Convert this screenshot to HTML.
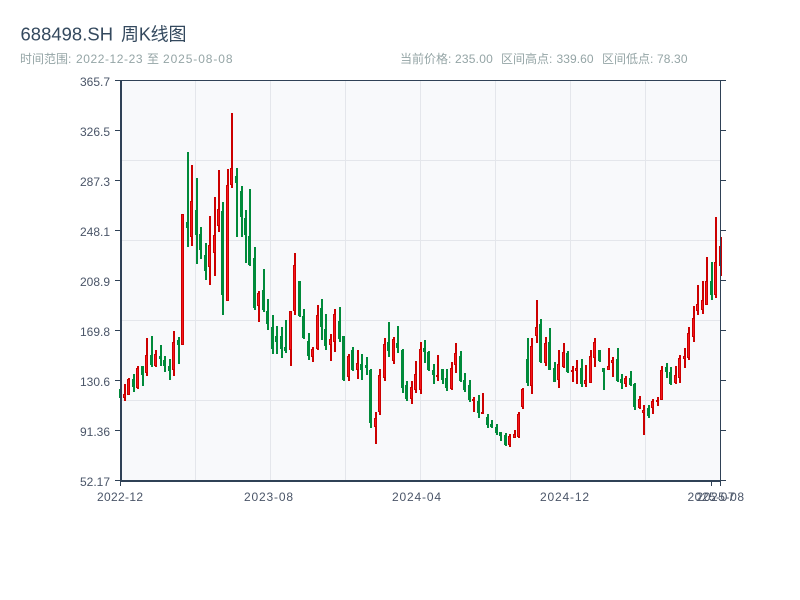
<!DOCTYPE html>
<html lang="zh">
<head>
<meta charset="utf-8">
<title>688498.SH 周K线图</title>
<style>
html,body{margin:0;padding:0;background:#fff;width:800px;height:600px;overflow:hidden}
svg{display:block;position:absolute;left:0;top:0}
text{font-family:"Liberation Sans","Noto Sans CJK SC",sans-serif}
.t{font-size:18.4px;fill:#34495e}
.s{font-size:12px;fill:#95a5a6}
.a{font-size:12px;fill:#4a5568}
</style>
</head>
<body>
<svg width="800" height="600" viewBox="0 0 800 600" xmlns="http://www.w3.org/2000/svg">
<rect x="120" y="80" width="600" height="400" fill="#f8f9fb"/>
<g shape-rendering="crispEdges" fill="none">
<path stroke="#e4e6eb" stroke-width="1" d="M195.5 80V480M270.5 80V480M345.5 80V480M420.5 80V480M495.5 80V480M570.5 80V480M645.5 80V480M120 160.5H720M120 240.5H720M120 320.5H720M120 400.5H720"/>
<path stroke="#008a3a" stroke-width="2" d="M120 389V398M134 374V392M143 366V386M152 336V367M161 345V366M165 356V372M170 359V380M179 337V364M188 152V247M197 178V264M201 227V259M206 243V280M223 202V315M237 168V237M242 186V237M246 210V263M250 189V266M255 247V310M264 269V312M268 299V330M273 315V354M277 326V354M282 327V358M286 320V353M300 281V317M304 309V339M309 333V360M322 299V340M326 314V350M340 307V342M344 336V381M353 347V371M362 354V380M367 357V375M371 369V428M389 322V357M398 326V353M403 349V393M407 381V401M425 340V363M429 351V371M434 364V384M443 369V384M447 369V391M461 351V382M465 373V392M470 380V402M479 395V418M488 414V428M492 420V428M497 424V435M501 432V441M506 433V446M528 338V386M541 319V363M550 328V370M555 362V382M568 351V373M582 359V387M600 350V362M604 368V390M618 348V382M622 374V389M631 371V386M635 383V410M649 405V418M667 363V378M671 367V385M712 262V300"/>
<path stroke="#008a3a" stroke-width="3" d="M133.5 379V387M142.5 366V375M151.5 355V365M160.5 356V359M164.5 360V366M169.5 366V371M178.5 340V345M187.5 222V228M196.5 210V235M200.5 234V250M205.5 255V271M222.5 211V295M236.5 176V183M241.5 191V217M245.5 218V235M249.5 236V265M254.5 258V308M263.5 290V310M267.5 311V324M272.5 327V349M276.5 336V342M281.5 336V349M285.5 347V351M299.5 281V316M303.5 316V338M308.5 341V356M321.5 308V327M325.5 329V346M339.5 321V339M343.5 336V380M352.5 350V370M361.5 364V370M366.5 365V368M370.5 370V423M388.5 342V351M397.5 343V348M402.5 350V388M406.5 385V399M424.5 348V352M428.5 352V370M433.5 370V375M442.5 369V380M446.5 378V388M460.5 356V381M464.5 380V390M469.5 385V400M478.5 401V413M487.5 417V425M491.5 424V427M496.5 427V433M500.5 432V436M505.5 435V445M527.5 359V383M540.5 324V362M549.5 342V370M554.5 368V382M567.5 353V372M581.5 368V384M599.5 350V361M603.5 368V372M617.5 359V381M621.5 379V383M630.5 378V385M634.5 384V407M648.5 408V416M666.5 367V372M670.5 372V384M711.5 281V295"/>
<path stroke="#cc0000" stroke-width="2" d="M125 384V401M129 378V395M138 366V389M147 338V376M156 350V367M174 331V376M183 214V345M192 165V246M210 216V285M215 197V276M219 170V232M228 169V301M232 113V188M259 291V322M291 311V366M295 253V315M313 347V362M318 305V350M331 334V361M335 309V352M349 354V381M358 350V379M376 412V444M380 369V415M385 338V381M394 337V364M412 381V404M416 361V393M421 342V394M438 355V381M452 362V390M456 343V373M474 397V412M483 393V414M510 434V447M515 430V438M519 412V438M523 388V409M532 338V394M537 300V343M546 337V366M559 350V388M564 343V368M573 366V382M577 360V384M586 365V387M591 350V383M595 338V367M609 348V370M613 357V377M626 376V387M640 396V409M644 405V435M653 399V414M658 397V406M662 366V400M676 366V384M680 355V383M685 348V368M689 327V360M694 306V342M698 285V315M703 281V314M707 257V305M716 217V298M721 237V276"/>
<path stroke="#cc0000" stroke-width="3" d="M124.5 394V398M128.5 379V395M137.5 368V388M146.5 355V373M155.5 354V366M173.5 342V370M182.5 214V345M191.5 201V237M209.5 245V267M214.5 235V253M218.5 209V226M227.5 185V301M231.5 168V185M258.5 293V306M290.5 311V350M294.5 265V311M312.5 349V357M317.5 315V349M330.5 339V345M334.5 314V342M348.5 356V377M357.5 363V370M375.5 418V427M379.5 375V412M384.5 344V378M393.5 339V361M411.5 387V399M415.5 374V390M420.5 349V390M437.5 375V377M451.5 368V389M455.5 353V365M473.5 399V401M482.5 412V414M509.5 436V445M514.5 434V438M518.5 414V437M522.5 389V407M531.5 346V386M536.5 327V336M545.5 343V363M558.5 364V380M563.5 352V367M572.5 370V372M576.5 368V371M585.5 380V384M590.5 356V383M594.5 342V358M608.5 366V370M612.5 360V363M625.5 378V384M639.5 399V408M643.5 410V413M652.5 401V408M657.5 400V402M661.5 370V400M675.5 375V383M679.5 358V378M684.5 356V359M688.5 333V358M693.5 318V337M697.5 304V311M702.5 300V310M706.5 281V305M715.5 262V295M720.5 246V266"/>
<path stroke="#f5161c" stroke-width="1" d="M124.5 395V397M128.5 380V394M137.5 369V387M146.5 356V372M155.5 355V365M173.5 343V369M182.5 215V344M191.5 202V236M209.5 246V266M214.5 236V252M218.5 210V225M227.5 186V300M231.5 169V184M258.5 294V305M290.5 312V349M294.5 266V310M312.5 350V356M317.5 316V348M330.5 340V344M334.5 315V341M348.5 357V376M357.5 364V369M375.5 419V426M379.5 376V411M384.5 345V377M393.5 340V360M411.5 388V398M415.5 375V389M420.5 350V389M451.5 369V388M455.5 354V364M509.5 437V444M514.5 435V437M518.5 415V436M522.5 390V406M531.5 347V385M536.5 328V335M545.5 344V362M558.5 365V379M563.5 353V366M576.5 369V370M585.5 381V383M590.5 357V382M594.5 343V357M608.5 367V369M612.5 361V362M625.5 379V383M639.5 400V407M643.5 411V412M652.5 402V407M661.5 371V399M675.5 376V382M679.5 359V377M684.5 357V358M688.5 334V357M693.5 319V336M697.5 305V310M702.5 301V309M706.5 282V304M715.5 263V294"/>
<path stroke="#2f4156" stroke-width="1" d="M115 80.5H726M115 130.5H120M115 180.5H120M115 230.5H120M115 280.5H120M115 330.5H120M115 380.5H120M115 430.5H120M115 480.5H120M720.5 80V482M721 130.5H726M721 180.5H726M721 230.5H726M721 280.5H726M721 330.5H726M721 380.5H726M721 430.5H726M721 480.5H726M120.5 482V486M711.5 482V486M720.5 482V486"/>
<path stroke="#2f4156" stroke-width="2" d="M121 80V482M120 481H721"/>
</g>
<text class="t" x="20.5" y="40.5" textLength="92.5" lengthAdjust="spacing">688498.SH</text>
<text class="t" x="121" y="40.5" style="font-size:18px" textLength="65.5" lengthAdjust="spacing">周K线图</text>
<text class="s" x="20" y="63">时间范围:</text>
<text class="s" x="76" y="63" textLength="66.5" lengthAdjust="spacing">2022-12-23</text>
<text class="s" x="147" y="63">至</text>
<text class="s" x="163" y="63" textLength="69.5" lengthAdjust="spacing">2025-08-08</text>
<text class="s" x="400" y="63">当前价格:</text>
<text class="s" x="455" y="63" textLength="37.8" lengthAdjust="spacing">235.00</text>
<text class="s" x="501" y="63">区间高点:</text>
<text class="s" x="556.5" y="63" textLength="37" lengthAdjust="spacing">339.60</text>
<text class="s" x="602" y="63">区间低点:</text>
<text class="s" x="657" y="63" textLength="30.5" lengthAdjust="spacing">78.30</text>
<g text-anchor="end">
<text class="a" x="110" y="86">365.7</text>
<text class="a" x="110" y="136">326.5</text>
<text class="a" x="110" y="186">287.3</text>
<text class="a" x="110" y="236">248.1</text>
<text class="a" x="110" y="286">208.9</text>
<text class="a" x="110" y="336">169.8</text>
<text class="a" x="110" y="386">130.6</text>
<text class="a" x="110" y="436">91.36</text>
<text class="a" x="110" y="486">52.17</text>
</g>
<text class="a" x="97" y="501" textLength="46" lengthAdjust="spacing">2022-12</text>
<text class="a" x="244" y="501" textLength="49" lengthAdjust="spacing">2023-08</text>
<text class="a" x="392" y="501" textLength="49" lengthAdjust="spacing">2024-04</text>
<text class="a" x="540" y="501" textLength="49" lengthAdjust="spacing">2024-12</text>
<text class="a" x="687.5" y="501" textLength="47" lengthAdjust="spacing">2025-07</text>
<text class="a" x="696.5" y="501" textLength="47.5" lengthAdjust="spacing">2025-08</text>
</svg>
</body>
</html>
